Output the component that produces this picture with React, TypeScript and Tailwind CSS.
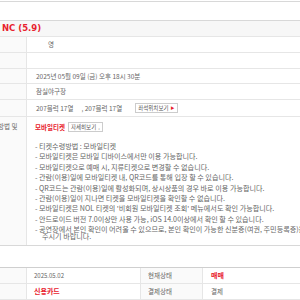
const notes = [
  '티켓수령방법 : 모바일티켓',
  '모바일티켓은 모바일 디바이스에서만 이용 가능합니다.',
  '모바일티켓으로 예매 시, 지류티켓으로 변경할 수 없습니다.',
  '관람(이용)일에 모바일티켓 내, QR코드를 통해 입장 할 수 있습니다.',
  'QR코드는 관람(이용)일에 활성화되며, 상시상품의 경우 바로 이용 가능합니다.',
  '관람(이용)일이 지나면 티켓을 모바일티켓을 확인할 수 없습니다.',
  "모바일티켓은 NOL 티켓의 '비회원 모바일티켓 조회' 메뉴에서도 확인 가능합니다.",
  '안드로이드 버전 7.0이상만 사용 가능, iOS 14.0이상에서 확인 할 수 있습니다.',
]

function Row({ label, children, h = 'h-[16px]' }: { label?: string; children?: React.ReactNode; h?: string }) {
  return (
    <div className={`flex border-t border-[#e6e6e6] ${h}`}>
      <div className="w-[27px] shrink-0 bg-[#fafafa] border-r border-[#e6e6e6] overflow-hidden">
        {label && <span className="block -ml-[1px] whitespace-nowrap">{label}</span>}
      </div>
      <div className="flex-1 flex items-center pl-[9px]">{children}</div>
    </div>
  )
}

export default function App() {
  return (
    <div
      className="w-[300px] h-[300px] overflow-hidden bg-white text-[#666] text-[6.5px] leading-[7px]"
      style={{ fontFamily: '"Noto Sans CJK KR", "Liberation Sans", sans-serif' }}
    >
      <div className="w-[360px]">
        <div className="h-[1px]" />
        <div className="h-[19px] border-t border-[#d8d8d8]" />
        {/* title band */}
        <div className="h-[16px] border-t border-[#d8d8d8] bg-[#f7f7f7] flex items-center pl-[2px]">
          <span className="text-[#e8212d] font-bold text-[8.5px]" style={{ fontFamily: '"DejaVu Sans", sans-serif' }}>
            NC (5.9)
          </span>
        </div>

        <Row>
          <span className="pl-[12px]">영</span>
        </Row>
        <Row />
        <Row h="h-[15px]">
          <span>2025년 05월 09일 (금) 오후 18시 30분</span>
        </Row>
        <Row>
          <span>잠실야구장</span>
        </Row>
        <Row h="h-[17px]">
          <span>207블럭 17열</span>
          <span className="ml-[8px]">, 207블럭 17열</span>
          <span className="ml-[13px] h-[10px] px-[2px] border border-[#ccc] flex items-center gap-[2px] text-[5.5px] text-[#555]">
            좌석위치보기
            <span className="text-[#e8212d] text-[4px]">▶</span>
          </span>
        </Row>

        {/* ticket info */}
        <div className="flex border-t border-[#e6e6e6] border-b border-b-[#d8d8d8]">
          <div className="w-[27px] shrink-0 bg-[#fafafa] border-r border-[#e6e6e6] overflow-hidden pt-[6px]">
            <span className="block -ml-[2px] whitespace-nowrap">방법 및</span>
          </div>
          <div className="flex-1 pl-[8px] pt-[5px] pb-[5px]">
            <div className="flex items-center h-[10px]">
              <span className="text-[#e8212d] font-bold text-[6.5px]">모바일티켓</span>
              <span className="ml-[3px] h-[10px] px-[2px] border border-[#ccc] flex items-center gap-[2px] text-[5.5px] text-[#555]">
                자세히보기
                <span className="text-[#777] text-[5px]">›</span>
              </span>
            </div>
            <ul className="mt-[11px] flex flex-col gap-[3.4px] text-[7.1px]">
              {notes.map((n) => (
                <li key={n} className="whitespace-nowrap">
                  - {n}
                </li>
              ))}
              <li className="whitespace-nowrap">
                - 공연장에서 본인 확인이 어려울 수 있으므로, 본인 확인이 가능한 신분증(여권, 주민등록증)을 지참하여
                <br />
                <span className="pl-[7px]">주시기 바랍니다.</span>
              </li>
            </ul>
          </div>
        </div>

        <div className="h-[21px]" />

        {/* payment table */}
        <div className="border-t border-[#cfcfcf]">
          {[
            { a: '2025.05.02', b: '현재상태', c: '매매', red: false, redC: true },
            { a: '신용카드', b: '결제상태', c: '결제', red: true, redC: false },
          ].map((r) => (
            <div key={r.b} className="flex h-[16px] border-b border-[#e6e6e6]">
              <div className="w-[27px] shrink-0 bg-[#fafafa] border-r border-[#e6e6e6]" />
              <div
                className={`w-[113px] shrink-0 flex items-center pl-[7px] ${
                  r.red ? 'text-[#e8212d] font-bold text-[7px]' : 'text-[6px]'
                }`}
              >
                {r.a}
              </div>
              <div className="w-[63px] shrink-0 bg-[#fafafa] border-x border-[#e6e6e6] flex items-center pl-[7px]">
                {r.b}
              </div>
              <div
                className={`flex-1 flex items-center pl-[8px] ${r.redC ? 'text-[#e8212d] font-bold text-[7px]' : ''}`}
              >
                {r.c}
              </div>
            </div>
          ))}
        </div>
      </div>
    </div>
  )
}
